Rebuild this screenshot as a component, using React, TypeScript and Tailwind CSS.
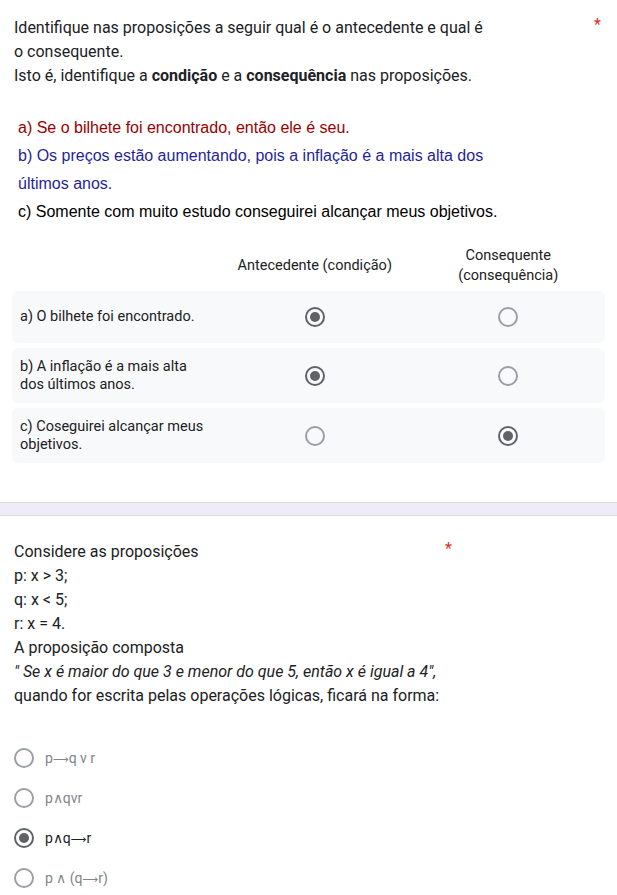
import React from "react";

const roboto = { fontFamily: "Roboto, 'Noto Sans', Arial, sans-serif" };

function Radio({ checked }: { checked: boolean }) {
  return (
    <div
      className={
        "w-5 h-5 rounded-full border-2 flex items-center justify-center shrink-0 " +
        (checked ? "border-[#5f6368]" : "border-[#9aa0a6]")
      }
    >
      {checked && <div className="w-[10px] h-[10px] rounded-full bg-[#5f6368]" />}
    </div>
  );
}

function GridRow({ label, a, b, h }: { label: React.ReactNode; a: boolean; b: boolean; h: string }) {
  return (
    <div className={"grid grid-cols-[206px_1fr_1fr] items-center bg-[#f8f9fa] rounded-md " + h}>
      <div className="pl-2 text-[14.5px] leading-[18px] text-[#202124]">{label}</div>
      <div className="flex justify-center">
        <Radio checked={a} />
      </div>
      <div className="flex justify-center">
        <Radio checked={b} />
      </div>
    </div>
  );
}

const Arrow = () => (
  <span style={{ fontFamily: "'DejaVu Sans', sans-serif" }} className="text-[11px]">
    ⟶
  </span>
);

function Option({ text, checked }: { text: React.ReactNode; checked: boolean }) {
  return (
    <div className="flex items-center h-10 pl-[14px]">
      <Radio checked={checked} />
      <span className={"ml-[11px] text-[14px] " + (checked ? "text-[#202124]" : "text-[#80868b]")}>{text}</span>
    </div>
  );
}

export default function App() {
  return (
    <div className="bg-white w-[617px] min-h-[895px]" style={roboto}>
      {/* Question 1 */}
      <div className="pt-4 pb-[39px]">
        <div className="flex px-[14px]">
          <div className="w-[580px] text-[16px] leading-6 text-[#202124]">
            Identifique nas proposições a seguir qual é o antecedente e qual é
            <br />
            o consequente.
            <br />
            Isto é, identifique a <b className="font-bold">condição</b> e a{" "}
            <b className="font-bold">consequência</b> nas proposições.
          </div>
          <span className="text-[#d93025] text-[16px] leading-6 -mt-[3px]">*</span>
        </div>
        <div
          className="mt-[26px] pl-[18px] text-[16px] leading-[28px]"
          style={{ fontFamily: "'Liberation Sans', Arial, sans-serif" }}
        >
          <div className="text-[#990000]">a) Se o bilhete foi encontrado, então ele é seu.</div>
          <div className="text-[#1f1f99]">
            b) Os preços estão aumentando, pois a inflação é a mais alta dos
            <br />
            últimos anos.
          </div>
          <div className="text-black">c) Somente com muito estudo conseguirei alcançar meus objetivos.</div>
        </div>

        <div className="mx-3 mt-5">
          <div className="grid grid-cols-[206px_1fr_1fr] items-center text-[14.5px] leading-5 text-[#202124]">
            <div />
            <div className="text-center">Antecedente (condição)</div>
            <div className="text-center">
              Consequente
              <br />
              (consequência)
            </div>
          </div>
          <div className="mt-[5px] flex flex-col gap-[5px]">
            <GridRow label="a) O bilhete foi encontrado." a={true} b={false} h="h-[52px]" />
            <GridRow
              label={
                <>
                  b) A inflação é a mais alta
                  <br />
                  dos últimos anos.
                </>
              }
              a={true}
              b={false}
              h="h-[55px]"
            />
            <GridRow
              label={
                <>
                  c) Coseguirei alcançar meus
                  <br />
                  objetivos.
                </>
              }
              a={false}
              b={true}
              h="h-[55px]"
            />
          </div>
        </div>
      </div>

      {/* Divider band */}
      <div className="h-[14px] bg-[#f0ebf8] border-t border-b border-[#dadce0]" />

      {/* Question 2 */}
      <div className="pt-6 pb-2">
        <div className="flex px-[14px]">
          <div className="w-[430px] text-[16px] leading-6 text-[#202124]">
            Considere as proposições
            <br />
            p: x &gt; 3;
            <br />
            q: x &lt; 5;
            <br />
            r: x = 4.
            <br />
            A proposição composta
            <br />
            <i className="italic">" Se x é maior do que 3 e menor do que 5, então x é igual a 4",</i>
            <br />
            quando for escrita pelas operações lógicas, ficará na forma:
          </div>
          <span className="text-[#d93025] text-[16px] leading-6 -mt-[3px] ml-[1px]">*</span>
        </div>
        <div className="mt-[30px]">
          <Option text={<>p<Arrow />q v r</>} checked={false} />
          <Option text="p∧qvr" checked={false} />
          <Option text={<>p∧q<Arrow />r</>} checked={true} />
          <Option text={<>p ∧ (q<Arrow />r)</>} checked={false} />
        </div>
      </div>
    </div>
  );
}
